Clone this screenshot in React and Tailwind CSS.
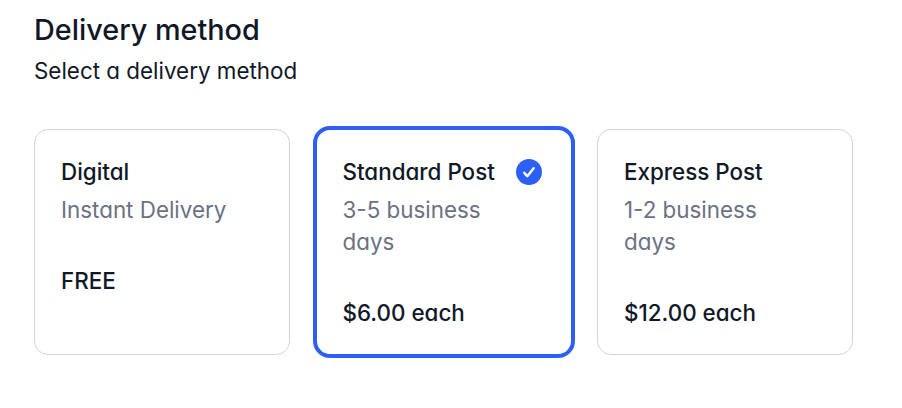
import React from 'react';

const methods = [
  { title: 'Digital', detail: 'Instant Delivery', price: 'FREE' },
  { title: 'Standard Post', detail: '3-5 business days', price: '$6.00 each', selected: true },
  { title: 'Express Post', detail: '1-2 business days', price: '$12.00 each' },
];

function CheckIcon({ visible }) {
  return (
    <svg viewBox="0 0 20 20" className={`-mr-[3px] h-8 w-8 shrink-0 ${visible ? '' : 'invisible'}`} aria-hidden="true">
      <circle cx="10" cy="10" r="8.1" fill="#2c5ff6" />
      <path d="m7 10.55 1.95 2.1 3.95-5.05" fill="none" stroke="#fff" strokeWidth="1.5" strokeLinecap="round" strokeLinejoin="round" />
    </svg>
  );
}

function Method({ title, detail, price, selected }) {
  return (
    <div className={`flex h-[226px] w-[256px] rounded-[14px] border pr-[26px] pl-[26px] pt-[26px] ${selected ? 'border-transparent outline-4 -outline-offset-1 outline-[#2c5ff6]' : 'border-[#d1d5dc]'}`}>
      <div className="flex w-[170px] shrink-0 flex-col">
        <span className="whitespace-nowrap text-[22.4px] leading-8 font-medium text-[#101828]">{title}</span>
        <span className="mt-[6px] text-[22.4px] leading-8 text-[#6a7282]">{detail}</span>
        <span className="mt-[39px] text-[22.4px] leading-8 font-medium text-[#101828]">{price}</span>
      </div>
      <CheckIcon visible={selected} />
    </div>
  );
}

export default function App() {
  return (
    <main className="h-[408px] w-[902px] overflow-hidden bg-white pl-[34px] pt-[10px] font-['Inter',sans-serif] text-[#101828] [font-feature-settings:'cv11']">
      <h2 className="text-[28.8px] leading-10 font-medium">Delivery method</h2>
      <p className="mt-[5px] text-[22.4px] leading-8">Select a delivery method</p>
      <div className="mt-[42px] grid grid-cols-[repeat(3,256px)] gap-[25.5px]">
        {methods.map((m) => <Method key={m.title} {...m} />)}
      </div>
    </main>
  );
}
